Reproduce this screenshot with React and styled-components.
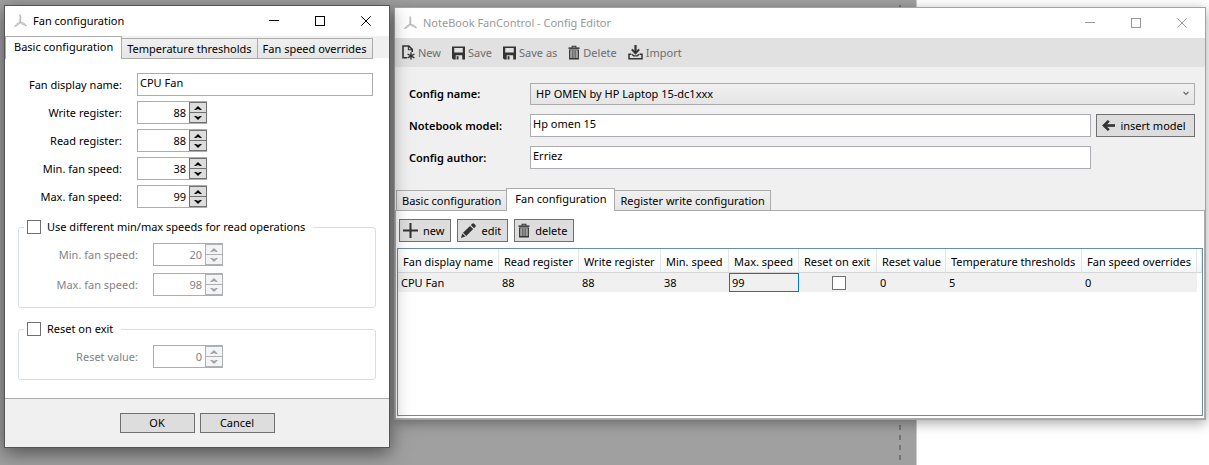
import React, { useState } from "react";
import styled, { createGlobalStyle } from "styled-components";

const GlobalStyle = createGlobalStyle`
  * {
    box-sizing: border-box;
  }
  body {
    margin: 0;
    background: #ffffff;
    font-family: "Noto Sans", "Open Sans", sans-serif;
    font-size: 11px;
    line-height: 16px;
    color: #000000;
  }
  button, input, select {
    margin: 0;
    font: inherit;
    color: inherit;
  }
`;

/* desktop */

const Desktop = styled.div`
  position: relative;
  min-height: 100vh;
  overflow: hidden;
  display: flex;
`;

const Sheet = styled.div`
  flex: 0 0 917px;
  display: flex;
  justify-content: flex-end;
  padding-right: 15px;
  background: #a0a0a0;
  border-right: 1px solid #cccccc;
`;

const Margin = styled.div`
  width: 2px;
  background: repeating-linear-gradient(
    #a0a0a0 0 5px,
    #747474 5px 10px
  );
`;

/* windows */

const Window = styled.section`
  position: absolute;
  display: flex;
  flex-direction: column;
  background: #f0f0f0;
`;

const EditorWindow = styled(Window)`
  top: 7px;
  left: 394px;
  right: 3px;
  border: 1px solid #a3a3a3;
  box-shadow: 0 3px 12px rgba(0, 0, 0, 0.35);
`;

const DialogWindow = styled(Window)`
  top: 5px;
  left: 4px;
  width: 386px;
  border: 1px solid #555555;
  box-shadow: 0 5px 18px rgba(0, 0, 0, 0.5);
`;

const TitleBar = styled.header`
  height: 30px;
  display: flex;
  align-items: center;
  padding-left: 8px;
  background: #ffffff;
  color: ${(props) => (props.$inactive ? "#999999" : "#000000")};
`;

const Title = styled.h1`
  flex: 1;
  margin: 0 0 0 5px;
  font-size: 11px;
  font-weight: normal;
`;

const ControlButton = styled.button`
  width: 46px;
  height: 30px;
  padding: 0;
  display: flex;
  align-items: center;
  justify-content: center;
  border: none;
  background: none;
`;

/* shared controls */

const TextBox = styled.input`
  width: 100%;
  height: 23px;
  padding: 0 3px 5px 2px;
  border: 1px solid #abadb3;
  background: #ffffff;
  outline: none;
`;

const Button = styled.button`
  height: ${(props) => (props.$small ? "20px" : "23px")};
  min-width: ${(props) => (props.$small ? "75px" : "0")};
  padding: ${(props) => (props.$small ? "0" : "0 6px 0 3px")};
  display: flex;
  align-items: center;
  justify-content: center;
  gap: 5px;
  border: 1px solid #707070;
  background: #dddddd;
  white-space: nowrap;
  svg {
    color: #333333;
  }
`;

const CheckBox = styled.input`
  appearance: none;
  display: block;
  width: 14px;
  height: 14px;
  border: 1px solid #707070;
  background: #ffffff;
  &:checked {
    background: #707070;
    box-shadow: inset 0 0 0 2px #ffffff;
  }
`;

const TabStrip = styled.div`
  height: 23px;
  display: flex;
  align-items: flex-end;
  padding-left: ${(props) => (props.$inset ? "1px" : "0")};
`;

const Tab = styled.button`
  position: relative;
  z-index: ${(props) => (props.$active ? 1 : 0)};
  height: ${(props) => (props.$active ? "23px" : "21px")};
  margin-left: ${(props) => (props.$first ? "0" : "-1px")};
  padding: ${(props) => (props.$active ? "0 8px 2px" : "0 5px")};
  border: 1px solid #acacac;
  border-bottom: ${(props) => (props.$active ? "none" : "1px solid #acacac")};
  background: ${(props) =>
    props.$active ? "#ffffff" : "linear-gradient(#f0f0f0, #e5e5e5)"};
  white-space: nowrap;
`;

/* numeric box */

const NumericFrame = styled.div`
  width: 70px;
  height: 23px;
  display: flex;
  border: 1px solid #abadb3;
  background: #ffffff;
  color: ${(props) => (props.$disabled ? "#838383" : "#000000")};
`;

const NumericInput = styled.input`
  flex: 1;
  min-width: 0;
  padding: 0 3px 0 0;
  border: none;
  outline: none;
  background: none;
  text-align: right;
`;

const Spinner = styled.div`
  width: 18px;
  margin-right: -1px;
  display: flex;
  flex-direction: column;
`;

const SpinButton = styled.button`
  flex: 1;
  padding: 0;
  display: flex;
  align-items: center;
  justify-content: center;
  border: 1px solid #707070;
  background: #dddddd;
  & + & {
    margin-top: -1px;
  }
  &:disabled {
    border-color: #adb2b5;
    background: #f4f4f4;
    color: #a0a0a0;
  }
`;

/* dialog */

const DialogBody = styled.div`
  margin-top: -1px;
  padding: 15px 13px 18px 0;
  background: #ffffff;
  border-bottom: 1px solid #acacac;
`;

const FanForm = styled.div`
  display: grid;
  grid-template-columns: 117px 1fr;
  column-gap: 15px;
  row-gap: 5px;
  align-items: center;
  padding-right: 3px;
`;

const FieldLabel = styled.label`
  text-align: right;
  color: ${(props) => (props.$disabled ? "#838383" : "#000000")};
`;

const Group = styled.fieldset`
  min-width: 0;
  margin: ${(props) => (props.$first ? "11px" : "13px")} 0 0 13px;
  padding: 7px 5px 11px;
  border: 1px solid #d5dfe5;
  border-radius: 3px;
`;

const GroupLegend = styled.legend`
  height: 17px;
  padding: 0 8px 0 3px;
`;

const CheckLabel = styled.label`
  display: flex;
  align-items: center;
  gap: 6px;
`;

const GroupForm = styled.div`
  display: grid;
  grid-template-columns: 114px 1fr;
  column-gap: 15px;
  row-gap: 7px;
  align-items: center;
`;

const DialogFooter = styled.footer`
  display: flex;
  justify-content: center;
  gap: 5px;
  padding: 14px 0;
`;

/* editor */

const Toolbar = styled.div`
  height: 29px;
  display: flex;
  align-items: center;
  gap: 11px;
  padding-left: 7px;
  background: #e1e1e1;
  border-bottom-right-radius: 3px;
`;

const ToolButton = styled.button`
  display: flex;
  align-items: center;
  gap: 3px;
  padding: 0;
  border: none;
  background: none;
  color: #6d6d6d;
  white-space: nowrap;
  svg {
    color: #333333;
  }
`;

const ConfigForm = styled.div`
  display: grid;
  grid-template-columns: 116px 1fr 99px;
  column-gap: 5px;
  row-gap: 9px;
  align-items: center;
  padding: 16px 10px 19px 14px;
`;

const ConfigLabel = styled.label`
  font-weight: 600;
`;

const SelectWrap = styled.div`
  grid-column: 2 / 4;
  position: relative;
  svg {
    position: absolute;
    top: 8px;
    right: 6px;
    pointer-events: none;
  }
`;

const Select = styled.select`
  appearance: none;
  display: block;
  width: 100%;
  height: 22px;
  padding: 0 20px 0 5px;
  border: 1px solid #acacac;
  border-radius: 0;
  background: linear-gradient(#f0f0f0, #e5e5e5);
`;

const Panel = styled.div`
  margin-top: -1px;
  padding: 8px 1px 2px;
  border: 1px solid #acacac;
  background: #ffffff;
`;

const PanelButtons = styled.div`
  display: flex;
  gap: 6px;
  padding: 0 0 6px 2px;
`;

const GridFrame = styled.div`
  min-height: 168px;
  border: 1px solid #688caf;
  overflow: hidden;
`;

const Table = styled.table`
  width: 100%;
  table-layout: fixed;
  border-collapse: separate;
  border-spacing: 0;
`;

const HeadCell = styled.th`
  width: ${(props) => (props.$width ? props.$width + "px" : "auto")};
  height: 24px;
  padding: 2px 0 0 5px;
  border-right: 1px solid #e2e4e6;
  border-bottom: 1px solid #d5d5d5;
  background: linear-gradient(#ffffff 40%, #f4f5f7);
  font-weight: normal;
  text-align: left;
  white-space: nowrap;
`;

const Cell = styled.td`
  height: 19px;
  padding: 0 0 0 2px;
  border: 1px solid ${(props) => (props.$selected ? "#0078d7" : "#f0f0f0")};
  background: #f0f0f0;
`;

const EmptyCell = styled.td`
  padding: 0;
`;

const CellCheck = styled(CheckBox)`
  margin: 0 auto;
`;

/* drawings */

const FanLogo = () => (
  <svg width="15" height="16" viewBox="0 0 15 16" fill="#dddddd" stroke="#a8a8a8" strokeWidth="0.7">
    <path d="M7 1.5C8.1 3.2 8 6 7.5 9L6.8 8.8C7 6 6.9 3.6 7 1.5Z" />
    <path d="M7.6 9C10 9.6 12.2 10.8 13.6 12.8C11.4 12.4 9 11.2 7.2 9.8Z" />
    <path d="M7.2 9.6C5.6 11.6 3.8 13 1.4 13.6C2.2 12 4.4 10.4 6.8 9.1Z" />
  </svg>
);

const MinimizeIcon = () => (
  <svg width="10" height="10" viewBox="0 0 10 10" stroke="currentColor" shapeRendering="crispEdges">
    <path d="M0 4.5H10" />
  </svg>
);

const MaximizeIcon = () => (
  <svg width="10" height="10" viewBox="0 0 10 10" fill="none" stroke="currentColor">
    <rect x="0.5" y="0.5" width="9" height="9" />
  </svg>
);

const CloseIcon = () => (
  <svg width="10" height="10" viewBox="0 0 10 10" stroke="currentColor">
    <path d="M0.3 0.3L9.7 9.7M9.7 0.3L0.3 9.7" />
  </svg>
);

const SpinArrow = ({ down }) => (
  <svg width="8" height="4" viewBox="0 0 8 4" fill="currentColor">
    <path d={down ? "M0 0H2L4 1L6 0H8L4 4Z" : "M0 4H2L4 3L6 4H8L4 0Z"} />
  </svg>
);

const NewFileIcon = () => (
  <svg width="13" height="15" viewBox="0 0 13 15" fill="none" stroke="currentColor">
    <path d="M5 12.8H1V1H6.8L10.2 4.4V7" strokeWidth="1.6" />
    <path d="M6.4 1V4.8H10.2" strokeWidth="1.1" />
    <path d="M9 7.2V14.4M5.6 9L12.4 12.8M12.4 9L5.6 12.8" strokeWidth="1.4" />
  </svg>
);

const SaveIcon = () => (
  <svg width="13" height="14" viewBox="0 0 14 14" fill="currentColor">
    <path fillRule="evenodd" d="M0 0H14V14H11V9.4H4V14H1.4L0 12.6ZM2.4 1.6V6.4H11.6V1.6Z" />
    <path d="M5 10.4H7V14H5Z" />
  </svg>
);

const TrashIcon = () => (
  <svg width="12" height="15" viewBox="0 0 13 15" fill="none" stroke="currentColor">
    <path d="M0.5 2.8H12.5" strokeWidth="1.6" />
    <path d="M4.5 2.4V0.8H8.5V2.4" strokeWidth="1.2" />
    <path d="M1.9 4.6V14.2H11.1V4.6" strokeWidth="1.5" />
    <path d="M4.5 5V13.5M6.5 5V13.5M8.5 5V13.5" strokeWidth="1.1" />
    <path d="M1.4 4.6H11.6" strokeWidth="0.8" />
  </svg>
);

const ImportIcon = () => (
  <svg width="15" height="15" viewBox="0 0 15 15" fill="none" stroke="currentColor">
    <path d="M7.5 0V7.5" strokeWidth="2.2" />
    <path d="M3.8 4.4L7.5 8.2L11.2 4.4" strokeWidth="2" />
    <path d="M3.4 9.2H1V13.8H14V9.2H11.6" strokeWidth="1.5" />
    <path d="M4 9.2L5.6 10.8H9.4L11 9.2" strokeWidth="1.3" />
  </svg>
);

const PlusIcon = () => (
  <svg width="15" height="15" viewBox="0 0 15 15" stroke="currentColor" strokeWidth="2">
    <path d="M7.5 0V15M0 7.5H15" />
  </svg>
);

const PencilIcon = () => (
  <svg width="15" height="15" viewBox="0 0 15 15" fill="currentColor">
    <path d="M0 15L1.3 10.5L4.4 13.6Z" />
    <path d="M2 9.7L9 2.9L12.2 6L5.2 12.9Z" />
    <path d="M9.8 2.1L11.5 0.6Q12.3 0 13.1 0.7L14.4 2.1Q15.1 2.9 14.4 3.7L13 5.2Z" />
  </svg>
);

const ArrowLeftIcon = () => (
  <svg width="13" height="11" viewBox="0 0 13 11" fill="none" stroke="currentColor" strokeWidth="2.6">
    <path d="M1.8 5.5H13" />
    <path d="M6.8 0.8L2 5.5L6.8 10.2" />
  </svg>
);

const ChevronIcon = () => (
  <svg width="6" height="5" viewBox="0 0 6 5" fill="none" stroke="#606060" strokeWidth="1.2">
    <path d="M0.5 0.8L3 3.3L5.5 0.8" />
  </svg>
);

/* parts */

const WindowControls = () => (
  <>
    <ControlButton aria-label="Minimize">
      <MinimizeIcon />
    </ControlButton>
    <ControlButton aria-label="Maximize">
      <MaximizeIcon />
    </ControlButton>
    <ControlButton aria-label="Close">
      <CloseIcon />
    </ControlButton>
  </>
);

const NumericField = ({ id, label, initial, disabled }) => {
  const [value, setValue] = useState(initial);
  return (
    <>
      <FieldLabel htmlFor={id} $disabled={disabled}>
        {label}
      </FieldLabel>
      <NumericFrame $disabled={disabled}>
        <NumericInput
          id={id}
          inputMode="numeric"
          value={value}
          disabled={disabled}
          onChange={(e) => setValue(Number(e.target.value) || 0)}
        />
        <Spinner>
          <SpinButton aria-label="Increase" disabled={disabled} onClick={() => setValue(value + 1)}>
            <SpinArrow />
          </SpinButton>
          <SpinButton aria-label="Decrease" disabled={disabled} onClick={() => setValue(value - 1)}>
            <SpinArrow down />
          </SpinButton>
        </Spinner>
      </NumericFrame>
    </>
  );
};

const Tabs = ({ names, active, inset }) => (
  <TabStrip role="tablist" $inset={inset}>
    {names.map((name, i) => (
      <Tab
        key={name}
        role="tab"
        aria-selected={name === active}
        $active={name === active}
        $first={i === 0}
      >
        {name}
      </Tab>
    ))}
  </TabStrip>
);

const tools = [
  { name: "New", Icon: NewFileIcon },
  { name: "Save", Icon: SaveIcon },
  { name: "Save as", Icon: SaveIcon },
  { name: "Delete", Icon: TrashIcon },
  { name: "Import", Icon: ImportIcon },
];

const columns = [
  { name: "Fan display name", width: 101 },
  { name: "Read register", width: 80 },
  { name: "Write register", width: 82 },
  { name: "Min. speed", width: 68 },
  { name: "Max. speed", width: 70 },
  { name: "Reset on exit", width: 78 },
  { name: "Reset value", width: 69 },
  { name: "Temperature thresholds", width: 136 },
  { name: "Fan speed overrides", width: 115 },
];

const Editor = () => (
  <EditorWindow>
    <TitleBar $inactive>
      <FanLogo />
      <Title>NoteBook FanControl - Config Editor</Title>
      <WindowControls />
    </TitleBar>
    <Toolbar>
      {tools.map(({ name, Icon }) => (
        <ToolButton key={name}>
          <Icon />
          {name}
        </ToolButton>
      ))}
    </Toolbar>
    <ConfigForm>
      <ConfigLabel htmlFor="config">Config name:</ConfigLabel>
      <SelectWrap>
        <Select id="config">
          <option>HP OMEN by HP Laptop 15-dc1xxx</option>
        </Select>
        <ChevronIcon />
      </SelectWrap>
      <ConfigLabel htmlFor="model">Notebook model:</ConfigLabel>
      <TextBox id="model" defaultValue="Hp omen 15" />
      <Button>
        <ArrowLeftIcon />
        insert model
      </Button>
      <ConfigLabel htmlFor="author">Config author:</ConfigLabel>
      <TextBox id="author" defaultValue="Erriez" />
    </ConfigForm>
    <Tabs
      names={["Basic configuration", "Fan configuration", "Register write configuration"]}
      active="Fan configuration"
      inset
    />
    <Panel>
      <PanelButtons>
        <Button>
          <PlusIcon />
          new
        </Button>
        <Button>
          <PencilIcon />
          edit
        </Button>
        <Button>
          <TrashIcon />
          delete
        </Button>
      </PanelButtons>
      <GridFrame>
        <Table>
          <thead>
            <tr>
              {columns.map((column) => (
                <HeadCell key={column.name} $width={column.width}>
                  {column.name}
                </HeadCell>
              ))}
              <HeadCell />
            </tr>
          </thead>
          <tbody>
            <tr>
              <Cell>CPU Fan</Cell>
              <Cell>88</Cell>
              <Cell>88</Cell>
              <Cell>38</Cell>
              <Cell $selected>99</Cell>
              <Cell>
                <CellCheck type="checkbox" aria-label="Reset on exit" />
              </Cell>
              <Cell>0</Cell>
              <Cell>5</Cell>
              <Cell>0</Cell>
              <EmptyCell />
            </tr>
          </tbody>
        </Table>
      </GridFrame>
    </Panel>
  </EditorWindow>
);

const FanDialog = () => (
  <DialogWindow>
    <TitleBar>
      <FanLogo />
      <Title>Fan configuration</Title>
      <WindowControls />
    </TitleBar>
    <Tabs
      names={["Basic configuration", "Temperature thresholds", "Fan speed overrides"]}
      active="Basic configuration"
    />
    <DialogBody>
      <FanForm>
        <FieldLabel htmlFor="fan-name">Fan display name:</FieldLabel>
        <TextBox id="fan-name" defaultValue="CPU Fan" />
        <NumericField id="write" label="Write register:" initial={88} />
        <NumericField id="read" label="Read register:" initial={88} />
        <NumericField id="min" label="Min. fan speed:" initial={38} />
        <NumericField id="max" label="Max. fan speed:" initial={99} />
      </FanForm>
      <Group $first>
        <GroupLegend>
          <CheckLabel>
            <CheckBox type="checkbox" />
            Use different min/max speeds for read operations
          </CheckLabel>
        </GroupLegend>
        <GroupForm>
          <NumericField id="read-min" label="Min. fan speed:" initial={20} disabled />
          <NumericField id="read-max" label="Max. fan speed:" initial={98} disabled />
        </GroupForm>
      </Group>
      <Group>
        <GroupLegend>
          <CheckLabel>
            <CheckBox type="checkbox" />
            Reset on exit
          </CheckLabel>
        </GroupLegend>
        <GroupForm>
          <NumericField id="reset" label="Reset value:" initial={0} disabled />
        </GroupForm>
      </Group>
    </DialogBody>
    <DialogFooter>
      <Button $small>OK</Button>
      <Button $small>Cancel</Button>
    </DialogFooter>
  </DialogWindow>
);

const App = () => (
  <>
    <GlobalStyle />
    <Desktop>
      <Sheet>
        <Margin />
      </Sheet>
      <Editor />
      <FanDialog />
    </Desktop>
  </>
);

export default App;
